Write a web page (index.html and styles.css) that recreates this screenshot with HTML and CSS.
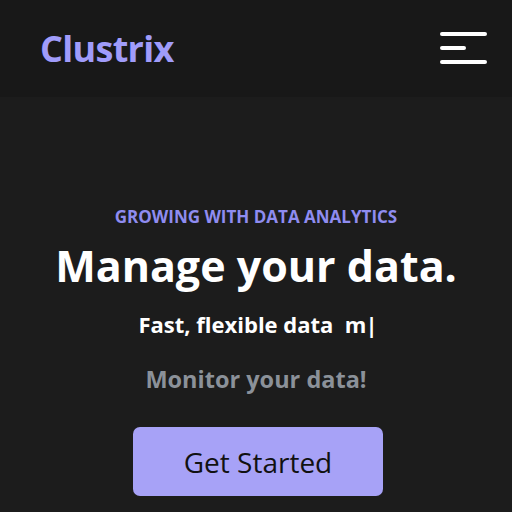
FILE: index.html
```html
<!DOCTYPE html>
<html lang="en">
<head>
<meta charset="utf-8">
<title>Clustrix</title>
<link rel="stylesheet" href="styles.css">
</head>
<body>
<header class="header">
  <a class="logo" href="#">Clustrix</a>
  <button class="menu" aria-label="Menu">
    <span class="bar"></span>
    <span class="bar short"></span>
    <span class="bar"></span>
  </button>
</header>
<main class="hero">
  <p class="eyebrow">GROWING WITH DATA ANALYTICS</p>
  <h1 class="title">Manage your data.</h1>
  <p class="typed">Fast, flexible data&nbsp; m<span class="caret">|</span></p>
  <p class="sub">Monitor your data!</p>
  <a class="cta" href="#">Get Started</a>
</main>
</body>
</html>
```

FILE: styles.css
```css
* { box-sizing: border-box; }
html, body { margin: 0; padding: 0; }
body {
  background: #1c1c1c;
  font-family: "Open Sans", "Noto Sans", sans-serif;
  color: #fff;
  height: 512px;
  overflow: hidden;
}
.header {
  height: 97px;
  background: #181818;
  display: flex;
  align-items: center;
  justify-content: space-between;
  padding: 0 24px 0 40px;
}
.logo {
  color: #a09cfa;
  font-weight: 700;
  font-size: 36px;
  line-height: 44px;
  text-decoration: none;
  letter-spacing: -0.7px;
}
.menu {
  background: none;
  border: 0;
  padding: 0;
  width: 48px;
  display: flex;
  flex-direction: column;
  gap: 10px;
  margin-top: -2px;
}
.bar {
  display: block;
  width: 47px;
  height: 4px;
  background: #fff;
  border-radius: 2px;
}
.bar.short { width: 26px; }
.hero {
  display: flex;
  flex-direction: column;
  align-items: center;
  text-align: center;
  padding-top: 109px;
}
.eyebrow {
  margin: 0;
  color: #8f8cf0;
  font-weight: 700;
  font-size: 17px;
  line-height: 22px;
}
.title {
  margin: 12px 0 0;
  font-size: 43px;
  line-height: 52px;
  font-weight: 700;
}
.typed {
  margin: 17px 0 0 4px;
  font-size: 22px;
  line-height: 30px;
  font-weight: 700;
}
.caret { font-weight: 700; margin-left: -1px; }
.sub {
  margin: 25px 0 0;
  color: #8b9199;
  font-size: 23.5px;
  line-height: 30px;
  font-weight: 700;
}
.cta {
  margin: 33px 0 0 4px;
  width: 250px;
  height: 69px;
  display: flex;
  align-items: center;
  justify-content: center;
  background: #a7a2f7;
  color: #111;
  border-radius: 7px;
  font-size: 28px;
  text-decoration: none;
}
```
